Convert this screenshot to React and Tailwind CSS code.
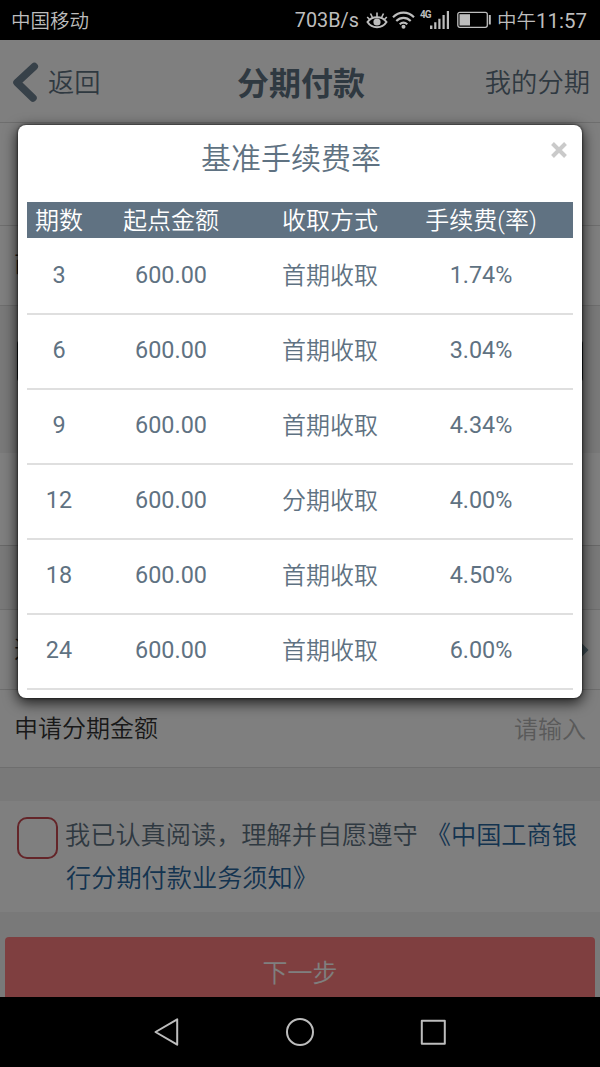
import React from 'react';

const rates = [
  { periods: 3, amount: '600.00', method: '首期收取', rate: '1.74%' },
  { periods: 6, amount: '600.00', method: '首期收取', rate: '3.04%' },
  { periods: 9, amount: '600.00', method: '首期收取', rate: '4.34%' },
  { periods: 12, amount: '600.00', method: '分期收取', rate: '4.00%' },
  { periods: 18, amount: '600.00', method: '首期收取', rate: '4.50%' },
  { periods: 24, amount: '600.00', method: '首期收取', rate: '6.00%' },
];

function StatusBar() {
  return (
    <div className="h-10 shrink-0 bg-black text-[#bdbdbd] flex items-center justify-between pl-[11px] pr-[13px] text-[19.5px] leading-10">
      <span className="pt-[3px] font-[350]">中国移动</span>
      <div className="flex items-center">
        <span className="text-[19.8px] pt-px">703B/s</span>
        {/* Eye comfort icon */}
        <svg className="ml-[7px]" width="22" height="20" viewBox="0 0 22 20" fill="none" stroke="currentColor" strokeWidth="2">
          <path d="M1.5 12C6 5.5 16 5.5 20.5 12C16 19 6 19 1.5 12Z" />
          <circle cx="11" cy="12" r="3.6" fill="currentColor" stroke="none" />
          <path d="M11 2.5V7M4.5 3.5L6.7 8M17.5 3.5L15.3 8M1.2 7L3.8 9.8M20.8 7L18.2 9.8" strokeWidth="1.6" />
        </svg>
        {/* Wifi */}
        <svg className="ml-[4px]" width="23" height="20" viewBox="0 0 23 20" fill="none" stroke="currentColor" strokeWidth="2.1">
          <path d="M1 7.3C7 1.1 16 1.1 22 7.3M4.3 10.9C8.5 6.8 14.5 6.8 18.7 10.9M7.7 14.3C10 12.2 13 12.2 15.3 14.3" />
          <circle cx="11.5" cy="16.8" r="2" fill="currentColor" stroke="none" />
        </svg>
        {/* Signal */}
        <span className="ml-[5px] -mt-[10px] text-[10px] leading-none font-bold w-[10px] tracking-[-0.8px]">4G</span>
        <svg width="20" height="20" viewBox="0 0 20 20" fill="currentColor">
          <path d="M0 15.5h2.4V19H0zM4.2 12.2h2.2V19H4.2zM8.3 8.8h2.2V19H8.3zM12.5 5h2.2v14h-2.2zM16.8 1H19v18h-2.2z" />
        </svg>
        {/* Battery */}
        <svg className="ml-[7px]" width="35" height="18" viewBox="0 0 35 18" fill="none" stroke="currentColor">
          <rect x="0.8" y="1.3" width="29.5" height="15" rx="2" strokeWidth="1.3" />
          <rect x="2.5" y="3.2" width="10.5" height="11.3" fill="currentColor" stroke="none" />
          <path d="M32.8 4V13.5" strokeWidth="2" />
        </svg>
        <span className="ml-[5px] pt-[3px]"><span className="font-[350]">中午</span><span className="text-[20.5px]">11:57</span></span>
      </div>
    </div>
  );
}

function RateDialog() {
  return (
    <div className="absolute left-[18px] top-[125px] w-[564px] h-[573px] rounded-lg bg-white px-[9px] text-[#5f7282] shadow-[0_4px_14px_1px_rgba(0,0,0,0.75),0_0_2px_1px_rgba(0,0,0,0.4)]">
      <h2 className="h-[77px] pt-[12px] text-center text-[30px] leading-[44px] pr-[18px] font-[350]">基准手续费率</h2>
      <button className="absolute right-[15px] top-[17px]">
        <svg width="16" height="16" viewBox="0 0 16 16" stroke="#cacaca" strokeWidth="4">
          <path d="M1.5 1.5L14.5 14.5M14.5 1.5L1.5 14.5" />
        </svg>
      </button>
      <div className="grid grid-cols-[64px_160px_158px_144px] h-[36px] mb-[2px] leading-[38px] bg-[#607282] text-white text-center text-[24px] font-[350]">
        <span>期数</span>
        <span>起点金额</span>
        <span>收取方式</span>
        <span>手续费(率)</span>
      </div>
      {rates.map((row) => (
        <div
          key={row.periods}
          className="grid grid-cols-[64px_160px_158px_144px] h-[75px] leading-[71px] border-b-2 border-[#dfdfdf] text-center text-[23.4px]"
        >
          <span>{row.periods}</span>
          <span>{row.amount}</span>
          <span className="text-[24px] leading-[73px] font-[350]">{row.method}</span>
          <span>{row.rate}</span>
        </div>
      ))}
    </div>
  );
}

function NavBar() {
  return (
    <div className="h-[70px] shrink-0 bg-black">
      <svg width="600" height="70" viewBox="0 0 600 70" fill="none" stroke="#bdbdbd" strokeWidth="2" strokeLinejoin="round">
        <path d="M155.5 35L177.2 22.3V47.7Z" />
        <circle cx="300" cy="35" r="13" />
        <rect x="421.8" y="23.8" width="23" height="23" />
      </svg>
    </div>
  );
}

export default function App() {
  return (
    <div className="w-[600px] h-[1067px] flex flex-col overflow-hidden font-['Roboto','Noto_Sans_CJK_SC',sans-serif]">
      <StatusBar />

      <div className="relative h-[957px] shrink-0 overflow-hidden bg-[#f3f3f3] text-[#5f7282]">
        {/* Header */}
        <div className="h-[83px] bg-white border-b border-[#dcdcdc] grid grid-cols-3 items-center pl-3 pr-[10px] pt-[2px] text-[26.3px]">
          <div className="flex items-center">
            <svg width="27" height="40" viewBox="0 0 27 40" fill="none" stroke="#6f8292" strokeWidth="7.5" strokeLinecap="round" strokeLinejoin="round">
              <path d="M22.3 4.5L5 20.5L21 36" />
            </svg>
            <span className="ml-[9px] pt-[4px] font-[350]">返回</span>
          </div>
          <h1 className="text-center text-[32px] font-bold pt-[3px]">分期付款</h1>
          <span className="text-right pt-[4px] font-[350]">我的分期</span>
        </div>

        {/* Form rows */}
        <div className="h-[103px] bg-white border-b border-[#dcdcdc]" />
        <div className="h-[80px] bg-white border-b border-[#dcdcdc] px-[14px] text-[24px] leading-[76px] text-[#333] font-[350]">商</div>
        <div className="h-[147px] pt-[34px] px-[17px]">
          <div className="h-[42px] rounded bg-[#30363c]" />
        </div>
        <div className="h-[93px] bg-white border-b border-[#d0d0d0]" />
        <div className="h-[63px]" />
        <div className="h-[81px] bg-white border-y border-[#dcdcdc] flex items-center justify-between pl-[14px] pr-[11px] text-[24px] text-[#333]">
          <span className="font-[350]">选</span>
          <svg width="12" height="18" viewBox="0 0 12 18" fill="none" stroke="#7a97a5" strokeWidth="5">
            <path d="M1 2L8 9L1 16" />
          </svg>
        </div>
        <div className="h-[78px] bg-white border-b border-[#dcdcdc] flex items-center justify-between px-[14px] text-[24px] text-[#333] font-[350]">
          <span>申请分期金额</span>
          <span className="text-[#b5b5b5] pt-[2px]">请输入</span>
        </div>

        {/* Agreement */}
        <div className="mt-[33px] h-[111px] bg-white flex pl-[17px] pt-[16px]">
          <span className="w-[41px] h-[42px] shrink-0 rounded-[10px] border-2 border-[#c84a52]" />
          <p className="ml-[7px] -mt-[3px] text-[25.2px] leading-[43px] whitespace-nowrap font-[350]">
            我已认真阅读，理解并自愿遵守 <span className="ml-[2px] text-[#28679f]">《中国工商银<br /><span className="ml-[1px]">行分期付款业务须知》</span></span>
          </p>
        </div>
        <button className="mt-[25px] mx-[5px] w-[590px] h-[72px] pt-[2px] rounded bg-[#ff7f80] text-white text-[25px] block font-[350]">下一步</button>

        {/* Dim layer behind the dialog */}
        <div className="absolute inset-0 bg-black/50" />
      </div>

      <NavBar />
      <div className="absolute left-0 top-0">
        <RateDialog />
      </div>
    </div>
  );
}
